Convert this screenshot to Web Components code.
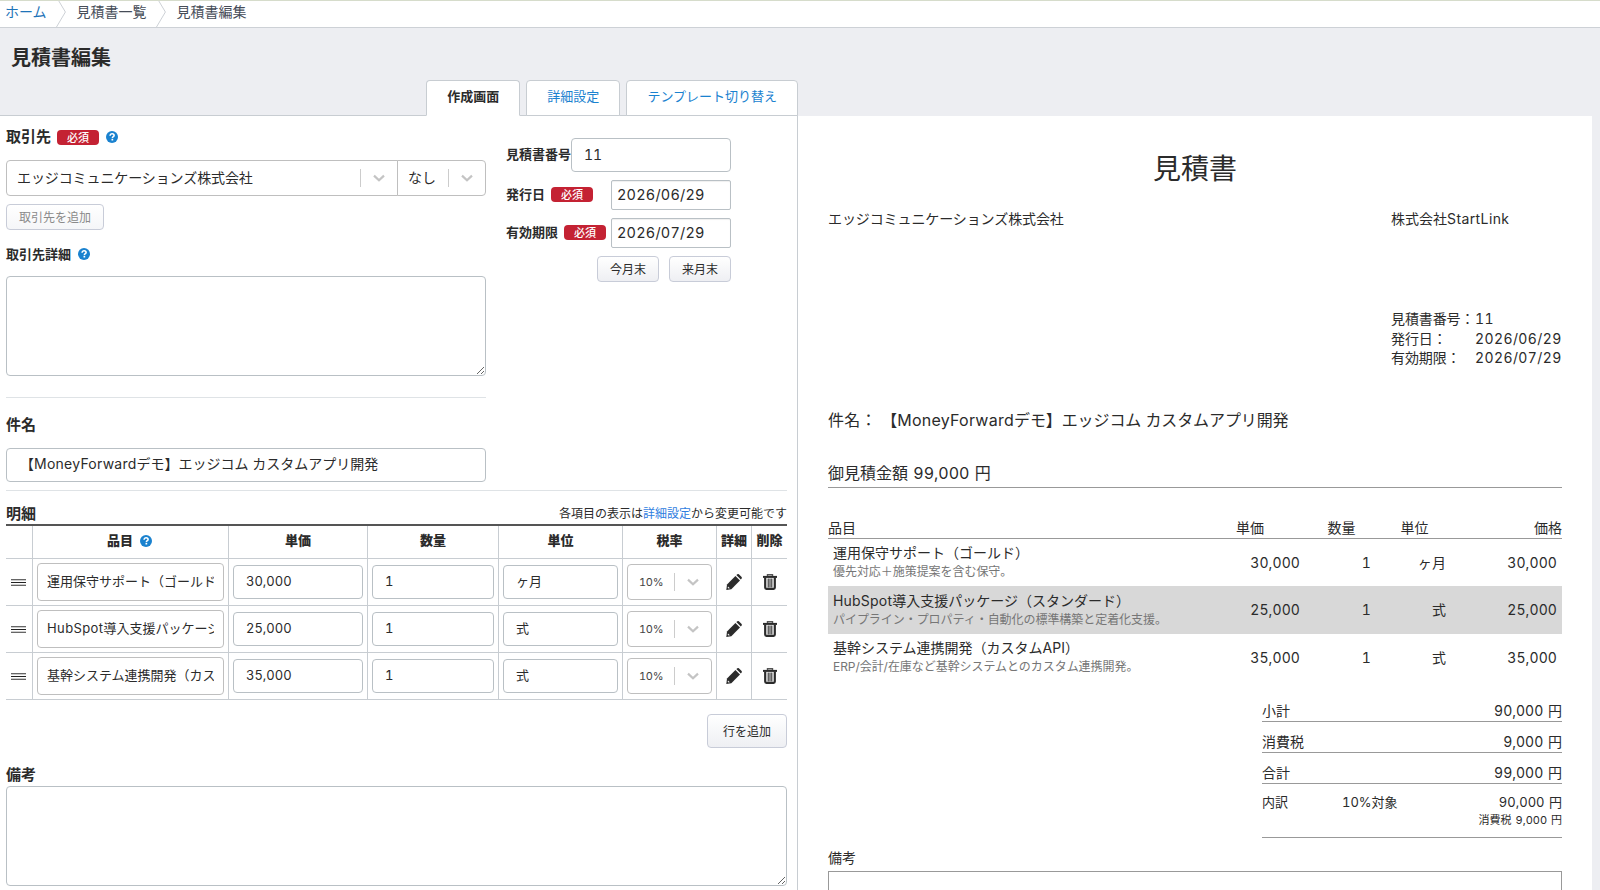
<!DOCTYPE html>
<html lang="ja">

<head>
    <meta charset="UTF-8">
    <meta name="viewport" content="width=device-width, initial-scale=1.0">
    <title>見積書編集</title>
    <style>
        /* Global CSS, only inherited properties reach the shadow roots */
        body {
            margin: 0;
            height: 890px;
            overflow: hidden;
            font: 14px/18px Inter, "Noto Sans CJK JP", sans-serif;
            font-variant-numeric: tabular-nums;
            color: #2b2b2b;
            background: #edeef2;
            white-space: nowrap;
            --line: #c8cdd2;
            --field: #b9c0c5;
            --blue: #1a82cf;
        }
    </style>
</head>

<body>
    <estimate-app></estimate-app>

    <script>
        // every element is: tag name, CSS for the shadow root, HTML for the shadow root
        const define = (tag, css, html) => {
            const template = document.createElement("template");
            template.innerHTML = `<style>*{box-sizing:border-box}${css}</style>${html}`;
            customElements.define(tag, class extends HTMLElement {
                constructor() {
                    super().attachShadow({ mode: "open" }).append(template.content.cloneNode(true));
                }
            });
        };

        /* ---------- small parts ---------- */

        define("required-badge", `
            :host { display: block; width: 42px; height: 15px; border-radius: 4px; background: #c42233;
                    color: #fff; font-size: 11px; font-weight: 500; line-height: 16px; text-align: center; }`,
            `必須`);

        define("help-icon", `
            :host { display: block; width: 12px; height: 12px; }
            svg { display: block; }`,
            `<svg width="12" height="12" viewBox="0 0 12 12">
                <circle cx="6" cy="6" r="6" fill="#1a82cf"/>
                <path d="M4.1 4.7C4.1 3.4 5 2.8 6.1 2.8s2 .7 2 1.7c0 1.2-1.7 1.2-1.7 2.4" fill="none" stroke="#fff" stroke-width="1.6"/>
                <rect x="5.5" y="7.8" width="1.7" height="1.7" fill="#fff"/>
            </svg>`);

        define("form-label", `
            :host { display: flex; align-items: center; height: 18px; font-weight: 700; font-size: 13px; }
            :host([large]) { font-size: 15px; }
            ::slotted(required-badge) { margin: 1px 0 0 6px; }
            ::slotted(help-icon) { margin-left: 7px; }`,
            `<slot></slot><slot name="after"></slot>`);

        define("text-field", `
            :host { display: block; overflow: hidden; height: 34px; border: 1px solid var(--field); border-radius: 4px;
                    background: #fff; padding: 0 12px; line-height: 31px; }
            :host([date]) { height: 30px; width: 120px; border-radius: 2px; padding: 0 5px; font-size: 14.5px;
                    line-height: 28px; letter-spacing: .2px; box-shadow: inset 0 1px 1px #0001; }
            div { overflow: hidden; }`,
            `<div><slot></slot></div>`);

        define("text-box", `
            :host { display: block; height: 100px; }
            textarea { display: block; width: 100%; height: 100%; margin: 0; border: 1px solid var(--field);
                    border-radius: 4px; background: #fff; }`,
            `<textarea></textarea>`);

        define("select-box", `
            :host { display: flex; align-items: center; height: 36px; border: 1px solid #bfbfbf; border-radius: 4px;
                    background: #fff; padding-left: 10px; letter-spacing: -.1px; }
            span { flex: 1; line-height: 34px; padding-bottom: 1px; }
            i { width: 1px; height: 18px; background: #ccc; }
            svg { margin: 0 12px; }
            :host([compact]) { font-size: 11px; color: #444; padding-left: 11px; letter-spacing: -.3px; }`,
            `<span><slot></slot></span><i></i>
            <svg width="12" height="8" viewBox="0 0 12 8"><path d="M1 1.6 6 6.2 11 1.6" fill="none" stroke="#c4c4c4" stroke-width="2.2"/></svg>`);

        define("ui-button", `
            :host { display: block; height: 26px; border: 1px solid #c8ccd8; border-radius: 4px; padding: 0 12px;
                    background: linear-gradient(#fff, #eeeff3); font-size: 12px; line-height: 25px; text-align: center; }
            :host([tall]) { height: 34px; line-height: 33px; padding: 0 15px; }
            :host([disabled]) { color: #8a8a8a; background: linear-gradient(#fff, #f5f6f8); }`,
            `<slot></slot>`);

        /* ---------- page header ---------- */

        define("crumb-bar", `
            :host { display: flex; height: 28px; background: #fff; border-top: 1px solid #d6dccb;
                    border-bottom: 1px solid #cdd1d6; padding-left: 5px; line-height: 21px; color: #464c57; }
            a { color: #1f74b8; }
            svg { margin: 0 11px 0 9px; flex: none; }`,
            `<a>ホーム</a>
            <svg width="10" height="26"><path d="M2.5-.5 9.4 11 .5 26" fill="none" stroke="#cdd1d6"/></svg>
            <span>見積書一覧</span>
            <svg width="10" height="26"><path d="M2.5-.5 9.4 11 .5 26" fill="none" stroke="#cdd1d6"/></svg>
            <span>見積書編集</span>`);

        define("tab-bar", `
            :host { display: flex; justify-content: flex-end; gap: 6px; width: 798px; height: 36px;
                    box-shadow: inset 0 -1px var(--line); }
            div { height: 36px; border: 1px solid var(--line); border-radius: 4px 4px 0 0; background: #fff;
                    padding: 0 20px; font-size: 13px; line-height: 31px; color: var(--blue); }
            .active { border-bottom-color: #fff; color: #2b2b2b; font-weight: 700; }`,
            `<div class="active">作成画面</div><div>詳細設定</div><div>テンプレート切り替え</div>`);

        /* ---------- line items ---------- */

        define("item-row", `
            :host { display: grid; grid-template-columns: 27px 196px 139px 131px 124px 94px 35px 35px; height: 47px;
                    border-bottom: 1px solid var(--line); font-size: 13px; }
            div { display: grid; align-items: center; border-right: 1px solid var(--line); padding: 0 4px; min-width: 0; }
            div:last-child { border: 0; }
            text-field { padding: 0 12px; }
            .name { height: 38px; padding: 0 9px; line-height: 34px; border-color: #bfbfbf; }
            svg { justify-self: center; }
            .grip { margin: 2px 1px 0 0; }`,
            `<div><svg class="grip" width="15" height="8"><path d="M0 .5h15M0 6.5h15" stroke="#666"/><path d="M0 3.5h15" stroke="#222"/><path d="M0 1.5h15M0 5.5h15" stroke="#ccc"/></svg></div>
            <div><text-field class="name"><slot name="name"></slot></text-field></div>
            <div><text-field><slot name="price"></slot></text-field></div>
            <div><text-field><slot name="count"></slot></text-field></div>
            <div><text-field><slot name="unit"></slot></text-field></div>
            <div><select-box compact><slot name="tax"></slot></select-box></div>
            <div><svg width="16" height="16" viewBox="0 0 16 16" fill="#2b2b2b">
                <path d="M9.4 1.9 14 6.5 5.3 15.2.3 15.9 1 10.4Z"/>
                <path d="M10.3 1.1 11.1.4Q12.1-.5 13.1.4L15.4 2.8Q16.3 3.8 15.5 4.7L14.8 5.6Z"/>
                <path d="M2 12.4 3.8 14.2 2.5 14.5 1.7 13.7Z" fill="#fff"/></svg></div>
            <div><svg width="14" height="16" viewBox="0 0 14 16" fill="none" stroke="#2b2b2b">
                <path d="M4.5 2V.8h5V2" stroke="#555" stroke-width="1.4"/><path d="M0 2.9h14" stroke-width="2"/>
                <path d="M2.2 3.5V13.6Q2.2 14.8 3.4 14.8H10.6Q11.8 14.8 11.8 13.6V3.5" stroke-width="2.2"/>
                <path d="M5.2 4.5V13.5M7 4.5V13.5M8.8 4.5V13.5" stroke-width="1.1"/></svg></div>`);

        define("item-table", `
            :host { display: block; border-top: 2px solid #555; }
            header { display: grid; grid-template-columns: 27px 196px 139px 131px 124px 94px 35px 35px; height: 33px;
                    border-bottom: 1px solid var(--line); font-size: 13px; font-weight: 700; line-height: 29px; }
            header > * { display: flex; justify-content: center; border-right: 1px solid var(--line); }
            header > :last-child { border: 0; }
            help-icon { margin: 9px 2px 0 7px; }`,
            `<header><b></b><b>品目<help-icon></help-icon></b><b>単価</b><b>数量</b><b>単位</b><b>税率</b><b>詳細</b><b>削除</b></header>
            <item-row><span slot="name">運用保守サポート（ゴールド</span><span slot="price">30,000</span><span slot="count">1</span><span slot="unit">ヶ月</span><span slot="tax">10%</span></item-row>
            <item-row><span slot="name"><span style="letter-spacing:.4px">HubSpot</span>導入支援パッケージ</span><span slot="price">25,000</span><span slot="count">1</span><span slot="unit">式</span><span slot="tax">10%</span></item-row>
            <item-row><span slot="name">基幹システム連携開発（カス</span><span slot="price">35,000</span><span slot="count">1</span><span slot="unit">式</span><span slot="tax">10%</span></item-row>`);

        /* ---------- left: the form ---------- */

        define("estimate-form", `
            :host { display: block; width: 798px; height: 774px; background: #fff; border-right: 1px solid var(--line);
                    padding: 12px 10px 0 6px; }
            hr { margin: 0; border: 0; height: 1px; background: #dfe3e6; }
            .top { display: grid; grid-template-columns: 480px 225px; gap: 20px; }
            .client { display: grid; grid-template-columns: 391px 89px; margin: 14px 0 8px; }
            .client select-box:first-child { border-radius: 4px 0 0 4px; width: 392px; }
            .client select-box:last-child { border-radius: 0 4px 4px 0; }
            .numbers { display: flex; flex-direction: column; gap: 8px; padding-top: 10px; }
            .numbers > div { display: flex; justify-content: space-between; align-items: center; }
            .numbers text-field:not([date]) { width: 160px; }
            .numbers form-label { margin-top: -3px; }
            .numbers .buttons { justify-content: flex-end; gap: 10px; }
            .caption { display: flex; justify-content: space-between; padding-top: 14px; height: 33px; font-size: 12px; }
            .caption a { color: #2f7de0; }
            .subject { width: 480px; padding: 0 13px; line-height: 29px; }`,
            `<div class="top">
                <section>
                    <form-label large>取引先<required-badge slot="after"></required-badge><help-icon slot="after"></help-icon></form-label>
                    <div class="client"><select-box>エッジコミュニケーションズ株式会社</select-box><select-box>なし</select-box></div>
                    <ui-button disabled style="width:98px">取引先を追加</ui-button>
                    <form-label style="margin:15px 0 13px">取引先詳細<help-icon slot="after"></help-icon></form-label>
                    <text-box></text-box>
                    <hr style="margin-top:21px">
                </section>
                <section class="numbers">
                    <div><form-label>見積書番号</form-label><text-field>11</text-field></div>
                    <div><form-label>発行日<required-badge slot="after"></required-badge></form-label><text-field date>2026/06/29</text-field></div>
                    <div><form-label>有効期限<required-badge slot="after"></required-badge></form-label><text-field date>2026/07/29</text-field></div>
                    <div class="buttons"><ui-button>今月末</ui-button><ui-button>来月末</ui-button></div>
                </section>
            </div>
            <form-label large style="margin:18px 0 14px">件名</form-label>
            <text-field class="subject">【<span style="letter-spacing:.25px">MoneyForward</span>デモ】エッジコム カスタムアプリ開発</text-field>
            <hr style="margin-top:8px">
            <div class="caption"><form-label large>明細</form-label><span>各項目の表示は<a>詳細設定</a>から変更可能です</span></div>
            <item-table></item-table>
            <ui-button tall style="width:80px;margin:14px 0 18px auto">行を追加</ui-button>
            <form-label large>備考</form-label>
            <text-box style="margin-top:2px"></text-box>`);

        /* ---------- right: the printed estimate ---------- */

        define("preview-row", `
            :host { display: grid; grid-template-columns: 367px 110px 71px 75px 111px; height: 47px; align-items: center; text-align: right; }
            :host([shaded]) { background: #d8d8d8; height: 48px; }
            .item { text-align: left; padding: 1px 0 0 5px; }
            .item div { font-size: 12px; line-height: 19px; color: #767676; letter-spacing: -.05px; }
            span { padding: 1px 5px 0 0; letter-spacing: .1px; }`,
            `<div class="item"><slot name="name"></slot><div><slot name="note"></slot></div></div>
            <span><slot name="price"></slot></span><span><slot name="count"></slot></span>
            <span><slot name="unit"></slot></span><span><slot name="total"></slot></span>`);

        define("total-row", `
            :host { display: flex; justify-content: space-between; height: 31px; border-bottom: 1px solid #999; padding-top: 11px;
                    word-spacing: 1px; }`,
            `<slot name="label"></slot><slot></slot>`);

        define("estimate-preview", `
            :host { display: block; width: 794px; height: 774px; overflow: hidden; background: #fff; padding: 0 30px; }
            h1 { margin: 33px 0 21px; font: inherit; font-size: 28px; line-height: 40px; text-align: center; }
            .parties, .head, .detail { display: grid; }
            .parties { grid-template-columns: 563px auto; height: 99px; }
            dl { display: grid; grid-template-columns: 84px auto; margin: 0 0 0 563px; line-height: 19.6px; letter-spacing: -.1px; }
            dd { margin: 0; letter-spacing: .4px; }
            .subject { margin: 41px 0 0; font-size: 16px; line-height: 22px; letter-spacing: -.1px; }
            .subject span { letter-spacing: .25px; }
            .amount { margin-top: 30px; height: 27px; border-bottom: 1px solid #999; font-size: 16px; line-height: 25px; word-spacing: 1px; }
            .head { grid-template-columns: 367px 110px 71px 75px 111px; margin-top: 29px; height: 22px;
                    border-bottom: 1px solid #999; text-align: center; line-height: 22px; }
            .head :first-child { text-align: left; }
            .head :last-child { text-align: right; }
            .head :nth-child(3), .head :nth-child(4) { padding-left: 2px; }
            .totals { width: 300px; margin: 10px 0 0 auto; }
            .detail { grid-template-columns: 80px auto 1fr; height: 54px; padding-top: 10px; border-bottom: 1px solid #999;
                    font-size: 13px; line-height: 17px; text-align: right; word-spacing: 1px; }
            small { display: block; margin-top: 1px; font-size: 11px; }
            .memo { margin-top: 11px; }
            .memo div { height: 60px; margin-top: 4px; border: 1px solid #999; }`,
            `<h1>見積書</h1>
            <div class="parties"><span style="letter-spacing:-.1px">エッジコミュニケーションズ株式会社</span><span>株式会社<span style="letter-spacing:.4px">StartLink</span></span></div>
            <dl><dt>見積書番号：</dt><dd>11</dd><dt>発行日：</dt><dd>2026/06/29</dd><dt>有効期限：</dt><dd>2026/07/29</dd></dl>
            <div class="subject"><span>件名： </span>【<span>MoneyForward</span>デモ】エッジコム カスタムアプリ開発</div>
            <div class="amount">御見積金額 99,000 円</div>
            <div class="head"><span>品目</span><span>単価</span><span>数量</span><span>単位</span><span>価格</span></div>
            <preview-row><span slot="name">運用保守サポート（ゴールド）</span><span slot="note">優先対応＋施策提案を含む保守。</span><span slot="price">30,000</span><span slot="count">1</span><span slot="unit">ヶ月</span><span slot="total">30,000</span></preview-row>
            <preview-row shaded><span slot="name"><span style="letter-spacing:.2px">HubSpot</span>導入支援パッケージ（スタンダード）</span><span slot="note">パイプライン・プロパティ・自動化の標準構築と定着化支援。</span><span slot="price">25,000</span><span slot="count">1</span><span slot="unit">式</span><span slot="total">25,000</span></preview-row>
            <preview-row><span slot="name">基幹システム連携開発（カスタムAPI）</span><span slot="note">ERP/会計/在庫など基幹システムとのカスタム連携開発。</span><span slot="price">35,000</span><span slot="count">1</span><span slot="unit">式</span><span slot="total">35,000</span></preview-row>
            <div class="totals">
                <total-row><span slot="label">小計</span>90,000 円</total-row>
                <total-row><span slot="label">消費税</span>9,000 円</total-row>
                <total-row><span slot="label">合計</span>99,000 円</total-row>
                <div class="detail"><span style="text-align:left">内訳</span><span>10%対象</span><span>90,000 円<small>消費税 9,000 円</small></span></div>
            </div>
            <div class="memo">備考<div></div></div>`);

        /* ---------- page ---------- */

        define("estimate-app", `
            :host { display: block; }
            h2 { margin: 0; height: 52px; padding: 17px 0 0 11px; font-size: 20px; line-height: 26px; }
            main { display: flex; }`,
            `<crumb-bar></crumb-bar>
            <h2>見積書編集</h2>
            <tab-bar></tab-bar>
            <main><estimate-form></estimate-form><estimate-preview></estimate-preview></main>`);
    </script>
</body>

</html>
